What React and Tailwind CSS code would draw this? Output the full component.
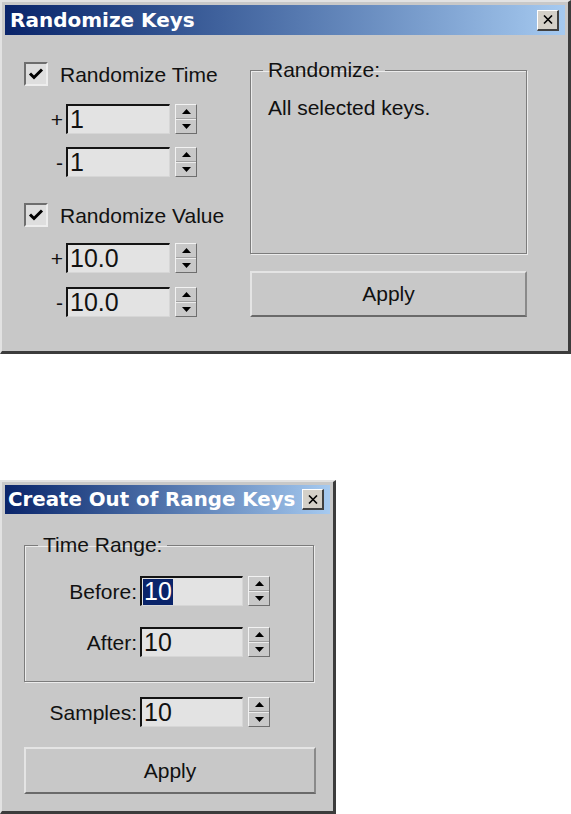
import React from "react";

const FONT = { fontFamily: '"Liberation Sans", Arial, sans-serif' };
const TFONT = { fontFamily: '"DejaVu Sans", Verdana, sans-serif' };

function TitleBar({ title, h, size, pl }) {
  return (
    <div
      className={`flex items-center justify-between bg-gradient-to-r from-[#0a246a] to-[#a6caf0] pr-[6px] ${pl} ${h}`}
    >
      <span className={`text-white font-bold ${size} leading-none whitespace-nowrap`} style={TFONT}>
        {title}
      </span>
      <CloseBtn />
    </div>
  );
}

function CloseBtn() {
  return (
    <div className="w-[22px] h-[21px] bg-[#d4d0c8] border-t border-l border-t-white border-l-white border-r-2 border-b-2 border-r-[#404040] border-b-[#404040] flex items-center justify-center">
      <svg width="10" height="9" viewBox="0 0 10 9">
        <path d="M1 0.5 L9 8.5 M9 0.5 L1 8.5" stroke="#000" strokeWidth="1.6" />
      </svg>
    </div>
  );
}

function Spinner() {
  return (
    <div className="w-[22px] h-full flex flex-col bg-[#c8c8c8] border-t border-l border-t-[#f2f2f2] border-l-[#f2f2f2] border-r border-b border-r-[#6e6e6e] border-b-[#6e6e6e]">
      <div className="flex-1 flex items-center justify-center border-b border-b-[#a0a0a0]">
        <svg width="9" height="5" viewBox="0 0 9 5">
          <path d="M4.5 0 L9 5 L0 5 Z" fill="#000" />
        </svg>
      </div>
      <div className="flex-1 flex items-center justify-center border-t border-t-[#ececec]">
        <svg width="9" height="5" viewBox="0 0 9 5">
          <path d="M0 0 L9 0 L4.5 5 Z" fill="#000" />
        </svg>
      </div>
    </div>
  );
}

function Field({ value, w, selected }) {
  return (
    <div
      className={`${w} h-full bg-[#e3e3e3] border-t-2 border-l-2 border-t-[#141414] border-l-[#141414] border-b border-r border-b-[#d6d6d6] border-r-[#d6d6d6] flex items-center pl-[1px] text-[25px] leading-none text-[#111]`}
    >
      {selected ? (
        <span className="bg-[#0a246a] text-white px-[1px] h-[26px] flex items-center">{value}</span>
      ) : (
        <span className="pl-[1px]">{value}</span>
      )}
    </div>
  );
}

function Checkbox() {
  return (
    <div className="w-[24px] h-[24px] shrink-0 bg-[#dedede] border-t-2 border-l-2 border-t-[#6e6e6e] border-l-[#6e6e6e] border-b-2 border-r-2 border-b-[#ededed] border-r-[#ededed] flex items-center justify-center">
      <svg width="16" height="14" viewBox="0 0 16 14">
        <path d="M2 6.5 L6 10.5 L14 2.5" stroke="#000" strokeWidth="3" fill="none" />
      </svg>
    </div>
  );
}

function Button({ label, cls }) {
  return (
    <div
      className={`${cls} bg-[#c8c8c8] border-t-2 border-l-2 border-t-[#e4e4e4] border-l-[#e4e4e4] border-b-2 border-r-2 border-b-[#6a6a6a] border-r-[#8a8a8a] flex items-center justify-center text-[21px] text-[#111]`}
    >
      {label}
    </div>
  );
}

function Window({ children, cls }) {
  return (
    <div
      className={`${cls} bg-[#c8c8c8] border-t-2 border-l-2 border-t-[#e2e2e2] border-l-[#e2e2e2] border-r-[3px] border-b-[3px] border-r-[#3c3c3c] border-b-[#3c3c3c] p-[3px] flex flex-col`}
      style={FONT}
    >
      {children}
    </div>
  );
}

function SpinRow({ sign, value }) {
  return (
    <div className="flex items-center h-[30px]">
      <div className="w-[42px] text-right pr-[3px] text-[21px] leading-none">{sign}</div>
      <Field value={value} w="w-[104px]" />
      <div className="w-[5px]" />
      <Spinner />
    </div>
  );
}

function LabeledRow({ label, value, selected, labelW }) {
  return (
    <div className="flex items-center h-[30px]">
      <div className={`${labelW} text-right pr-[3px] text-[21px] leading-none`}>{label}</div>
      <Field value={value} w="w-[103px]" selected={selected} />
      <div className="w-[5px]" />
      <Spinner />
    </div>
  );
}

export default function App() {
  return (
    <div className="bg-white w-[571px] h-[814px] flex flex-col text-[#111]" style={FONT}>
      <Window cls="w-[571px] h-[354px]">
        <TitleBar title="Randomize Keys" h="h-[30px]" size="text-[20px]" pl="pl-[5px]" />
        <div className="flex pt-[26px] pl-[19px]">
          {/* left column */}
          <div className="flex flex-col w-[207px] shrink-0">
            <div className="flex items-center h-[24px] mt-[1px]">
              <Checkbox />
              <span className="ml-[12px] text-[21px] leading-none whitespace-nowrap">Randomize Time</span>
            </div>
            <div className="mt-[18px]">
              <SpinRow sign="+" value="1" />
            </div>
            <div className="mt-[13px]">
              <SpinRow sign="-" value="1" />
            </div>
            <div className="flex items-center h-[24px] mt-[26px]">
              <Checkbox />
              <span className="ml-[12px] text-[21px] leading-none whitespace-nowrap">Randomize Value</span>
            </div>
            <div className="mt-[16px]">
              <SpinRow sign="+" value="10.0" />
            </div>
            <div className="mt-[14px]">
              <SpinRow sign="-" value="10.0" />
            </div>
          </div>
          {/* right column */}
          <div className="flex flex-col ml-[19px] w-[277px]">
            <fieldset className="h-[194px] border border-[#7c7c7c] shadow-[inset_1px_1px_0_#ececec,1px_1px_0_#ececec] mt-[-1px]">
              <legend className="ml-[12px] px-[5px] text-[21px] leading-[20px]">Randomize:</legend>
              <div className="mt-[17px] pl-[17px] text-[21px] leading-none">All selected keys.</div>
            </fieldset>
            <Button label="Apply" cls="mt-[17px] h-[46px] w-[277px]" />
          </div>
        </div>
      </Window>

      <div className="h-[126px]" />

      <Window cls="w-[336px] h-[334px]">
        <TitleBar title="Create Out of Range Keys" h="h-[29px]" size="text-[19.8px]" pl="pl-[3px]" />
        <div className="flex flex-col pl-[19px] pt-[21px]">
          <fieldset className="w-[290px] h-[147px] border border-[#7c7c7c] shadow-[inset_1px_1px_0_#ececec,1px_1px_0_#ececec]">
            <legend className="ml-[13px] px-[5px] text-[21px] leading-[20px]">Time Range:</legend>
            <div className="mt-[21px]">
              <LabeledRow label="Before:" value="10" selected labelW="w-[115px]" />
            </div>
            <div className="mt-[21px]">
              <LabeledRow label="After:" value="10" labelW="w-[115px]" />
            </div>
          </fieldset>
          <div className="mt-[15px]">
            <LabeledRow label="Samples:" value="10" labelW="w-[116px]" />
          </div>
          <Button label="Apply" cls="mt-[20px] h-[47px] w-[292px]" />
        </div>
      </Window>
    </div>
  );
}
